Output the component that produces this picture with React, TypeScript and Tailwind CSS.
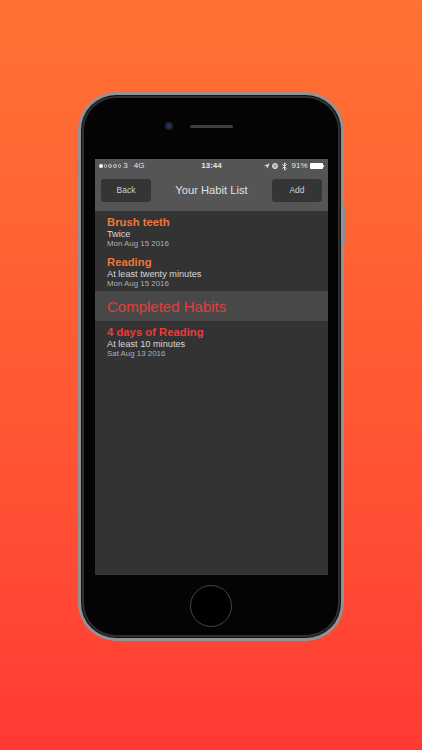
import { Bluetooth, Navigation } from "lucide-react";

type Habit = { title: string; note: string; date: string };

const activeHabits: Habit[] = [
  { title: "Brush teeth", note: "Twice", date: "Mon Aug 15 2016" },
  { title: "Reading", note: "At least twenty minutes", date: "Mon Aug 15 2016" },
];

const doneHabits: Habit[] = [
  { title: "4 days of Reading", note: "At least 10 minutes", date: "Sat Aug 13 2016" },
];

function HabitRow({ habit, titleClass }: { habit: Habit; titleClass: string }) {
  return (
    <div className="h-10 pl-3 pt-[4px]">
      <div className={`h-[14px] text-[11.3px] leading-[14px] font-bold ${titleClass}`}>{habit.title}</div>
      <div className="h-[10px] text-[9.2px] leading-[10px] text-[#d8d8d8]">{habit.note}</div>
      <div className="h-[10px] text-[7.9px] leading-[10px] text-[#b0b0b0]">{habit.date}</div>
    </div>
  );
}

function NavButton({ label }: { label: string }) {
  return (
    <div className="flex h-[23px] w-[50px] items-center justify-center rounded-[3px] bg-[#353535] text-[8.5px] text-[#d0d0d0]">
      {label}
    </div>
  );
}

function SideButton({ className }: { className: string }) {
  return <div className={`absolute w-[2px] rounded-[1px] bg-[#8d8b90] ${className}`} />;
}

export default function App() {
  return (
    <div
      className="h-[750px] w-[422px] overflow-hidden bg-gradient-to-b from-[#ff7233] to-[#ff3a33] pt-[92px] pl-[78px]"
      style={{ fontFamily: '"Liberation Sans", Arial, sans-serif' }}
    >
      <div className="relative h-[549px] w-[266px]">
        <SideButton className="-left-[1px] top-[67px] h-[20px]" />
        <SideButton className="-left-[1px] top-[112px] h-[38px]" />
        <SideButton className="-left-[1px] top-[160px] h-[38px]" />
        <SideButton className="-right-[1px] top-[114px] h-[38px]" />

        <div className="h-full w-full rounded-[38px] bg-[#939296] p-[3px]">
          <div className="h-full w-full rounded-[35px] bg-[#141414] p-[1px]">
            <div className="h-full w-full rounded-[34px] bg-[#303032] p-[2px]">
              <div className="flex h-full w-full flex-col items-center rounded-[32px] bg-[#040404]">
                {/* camera and speaker */}
                <div className="flex h-[61px] shrink-0 items-start self-start pl-[81px] pt-[24px]">
                  <div className="flex h-[8px] w-[8px] items-center justify-center rounded-full bg-[#20242e]">
                    <div className="h-[4px] w-[4px] rounded-full bg-[#22356b]" />
                  </div>
                  <div className="ml-[17px] mt-[3px] h-[3px] w-[43px] rounded-full bg-[#3f3f41]" />
                </div>

                {/* screen */}
                <div className="ml-[11px] h-[416px] w-[233px] shrink-0 self-start bg-[#333333]">
                  <div className="bg-[#555555]">
                    <div className="flex h-[13px] items-center justify-between pl-[4px] pr-[4px] pt-[1px] text-[8px] text-[#e6e6e6]">
                      <div className="flex w-[70px] items-center">
                        <div className="h-[3.5px] w-[3.5px] rounded-full bg-white" />
                        {[0, 1, 2, 3].map((i) => (
                          <div key={i} className="ml-[1.2px] h-[3.5px] w-[3.5px] rounded-full border-[0.5px] border-[#cccccc]" />
                        ))}
                        <span className="ml-[2px]">3</span>
                        <span className="ml-[6px]">4G</span>
                      </div>
                      <div className="font-bold">13:44</div>
                      <div className="flex w-[70px] items-center justify-end">
                        <Navigation size={6} fill="#e6e6e6" strokeWidth={1} />
                        <div className="ml-[2px] h-[6px] w-[6px] rounded-full border-[1.5px] border-[#e6e6e6] bg-[#aaaaaa]" />
                        <Bluetooth size={9} strokeWidth={2.5} className="ml-[2px]" />
                        <span className="ml-[2px]">91%</span>
                        <div className="ml-[2px] h-[6px] w-[13px] rounded-[1px] bg-white" />
                        <div className="ml-[0.5px] h-[2px] w-[1px] bg-[#e6e6e6]" />
                      </div>
                    </div>
                    <div className="flex h-[39px] items-center justify-between px-[6px] pb-[4px] pt-[1px]">
                      <NavButton label="Back" />
                      <div className="text-[11.2px] text-[#e0e0e0]">Your Habit List</div>
                      <NavButton label="Add" />
                    </div>
                  </div>

                  {activeHabits.map((habit) => (
                    <HabitRow key={habit.title} habit={habit} titleClass="text-[#ee7638]" />
                  ))}

                  <div className="flex h-[30px] items-center bg-[#484848] pl-3 pt-[2px] text-[15px] text-[#e03e3d]">
                    Completed Habits
                  </div>

                  {doneHabits.map((habit) => (
                    <HabitRow key={habit.title} habit={habit} titleClass="text-[#ea3c3c]" />
                  ))}
                </div>

                {/* home button */}
                <div className="mt-[10px] h-[42px] w-[42px] shrink-0 rounded-full border-[1.5px] border-[#444448] bg-black" />
              </div>
            </div>
          </div>
        </div>
      </div>
    </div>
  );
}
